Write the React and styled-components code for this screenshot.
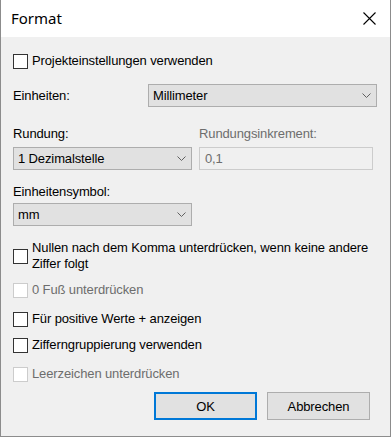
import styled, { createGlobalStyle } from "styled-components";

const GlobalStyle = createGlobalStyle`
  html, body {
    margin: 0;
    padding: 0;
    background: #f0f0f0;
  }
  * {
    box-sizing: border-box;
  }
`;

const Window = styled.div`
  width: 391px;
  height: 437px;
  display: flex;
  flex-direction: column;
  background: #f0f0f0;
  border: 1px solid #8c8c8c;
  border-top: none;
  font-family: "Liberation Sans", Arial, sans-serif;
  font-size: 13px;
  letter-spacing: -0.12px;
  color: #000;
`;

const TitleBar = styled.div`
  height: 37px;
  flex-shrink: 0;
  background: #fff;
  display: flex;
  align-items: center;
  justify-content: space-between;
  padding-left: 10px;
`;

const Title = styled.span`
  font-family: "Noto Sans", "Open Sans", sans-serif;
  font-size: 15px;
  letter-spacing: 0;
  color: #000;
  padding-bottom: 1px;
`;

const CloseBtn = styled.div`
  width: 42px;
  height: 37px;
  display: flex;
  align-items: center;
  justify-content: center;
  padding-bottom: 1px;
`;

const Body = styled.div`
  flex: 1;
  display: flex;
  flex-direction: column;
  padding: 16px 13px 0 12px;
`;

const CheckRow = styled.div`
  display: flex;
  align-items: center;
  gap: 4px;
  margin-top: ${(p) => p.$mt || "0"};
`;

const Box = styled.div`
  width: 15px;
  height: 15px;
  flex-shrink: 0;
  background: #fff;
  border: 1px solid ${(p) => (p.$disabled ? "#cccccc" : "#333333")};
`;

const Label = styled.span`
  font-size: 13px;
  line-height: 16px;
  color: ${(p) => (p.$disabled ? "#6d6d6d" : "#000")};
`;

const UnitRow = styled.div`
  display: flex;
  align-items: center;
  justify-content: space-between;
  margin-top: 15px;
`;

const SelectBox = styled.div`
  width: ${(p) => p.$width};
  height: 23px;
  display: flex;
  align-items: center;
  justify-content: space-between;
  padding: 0 5px 0 4px;
  background: #e1e1e1;
  border: 1px solid #adadad;
`;

const RoundingGrid = styled.div`
  display: grid;
  grid-template-columns: 179px 174px;
  column-gap: 7px;
  row-gap: 5px;
  margin-top: 19px;
`;

const ReadonlyInput = styled.div`
  height: 23px;
  display: flex;
  align-items: center;
  padding-left: 5px;
  background: #f0f0f0;
  border: 1px solid #cccccc;
  color: #6d6d6d;
`;

const Field = styled.div`
  display: flex;
  flex-direction: column;
  gap: 3px;
  margin-top: 14px;
`;

const ButtonRow = styled.div`
  display: flex;
  justify-content: flex-end;
  gap: 10px;
  margin-top: 10px;
  padding-right: 7px;
`;

const Button = styled.div`
  width: 103px;
  height: 28px;
  display: flex;
  align-items: center;
  justify-content: center;
  background: #e1e1e1;
  border: ${(p) => (p.$primary ? "2px solid #0078d7" : "1px solid #adadad")};
  font-size: 13px;
`;

const Chevron = () => (
  <svg width="9" height="5" viewBox="0 0 9 5">
    <path d="M0.5 0.5 L4.5 4.5 L8.5 0.5" fill="none" stroke="#606060" strokeWidth="1" />
  </svg>
);

const CloseIcon = () => (
  <svg width="13" height="13" viewBox="0 0 13 13">
    <path d="M0.5 0.5 L12.5 12.5 M12.5 0.5 L0.5 12.5" stroke="#000" strokeWidth="1.1" />
  </svg>
);

const Check = ({ label, disabled, mt }) => (
  <CheckRow $mt={mt}>
    <Box $disabled={disabled} />
    <Label $disabled={disabled}>{label}</Label>
  </CheckRow>
);

const Dropdown = ({ value, width }) => (
  <SelectBox $width={width}>
    <span>{value}</span>
    <Chevron />
  </SelectBox>
);

const App = () => {
  return (
    <Window>
      <GlobalStyle />
      <TitleBar>
        <Title>Format</Title>
        <CloseBtn>
          <CloseIcon />
        </CloseBtn>
      </TitleBar>
      <Body>
        <Check label="Projekteinstellungen verwenden" />

        <UnitRow>
          <Label>Einheiten:</Label>
          <Dropdown value="Millimeter" width="229px" />
        </UnitRow>

        <RoundingGrid>
          <Label>Rundung:</Label>
          <Label $disabled>Rundungsinkrement:</Label>
          <Dropdown value="1 Dezimalstelle" width="179px" />
          <ReadonlyInput>0,1</ReadonlyInput>
        </RoundingGrid>

        <Field>
          <Label>Einheitensymbol:</Label>
          <Dropdown value="mm" width="179px" />
        </Field>

        <CheckRow $mt="14px">
          <Box />
          <Label>
            Nullen nach dem Komma unterdrücken, wenn keine andere
            <br />
            Ziffer folgt
          </Label>
        </CheckRow>
        <Check label="0 Fuß unterdrücken" disabled mt="10px" />
        <Check label="Für positive Werte + anzeigen" mt="13px" />
        <Check label="Zifferngruppierung verwenden" mt="10px" />
        <Check label="Leerzeichen unterdrücken" disabled mt="13px" />

        <ButtonRow>
          <Button $primary>OK</Button>
          <Button>Abbrechen</Button>
        </ButtonRow>
      </Body>
    </Window>
  );
};

export default App;
